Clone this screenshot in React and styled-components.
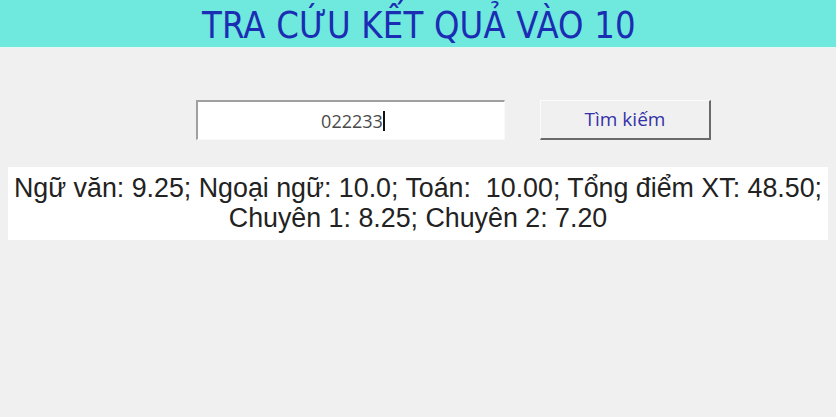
import React from 'react';
import styled, { createGlobalStyle } from 'styled-components';

const GlobalStyle = createGlobalStyle`
  html, body {
    margin: 0;
    padding: 0;
    background: #f0f0f0;
  }
  body {
    font-family: "Liberation Sans", Arial, sans-serif;
  }
`;

const Page = styled.div`
  width: 836px;
  height: 417px;
  background: #f0f0f0;
  display: flex;
  flex-direction: column;
`;

const Header = styled.div`
  height: 47px;
  background: #6fe8dd;
  display: flex;
  align-items: center;
  justify-content: center;
  border-bottom: 1px solid #e6f7f5;
`;

const Title = styled.h1`
  margin: 0;
  font-family: "Liberation Sans Narrow", "DejaVu Sans Condensed", sans-serif;
  font-weight: normal;
  font-size: 36px;
  color: #1a2db3;
  letter-spacing: 0.2px;
  padding: 2px 0 0 2px;
  transform: scaleY(1.05);
`;

const SearchRow = styled.div`
  display: flex;
  align-items: center;
  gap: 35px;
  margin-top: 52px;
  padding-left: 196px;
`;

const Field = styled.div`
  box-sizing: border-box;
  width: 309px;
  height: 40px;
  background: #fff;
  border-top: 2px solid #a0a0a0;
  border-left: 2px solid #a0a0a0;
  border-right: 1px solid #fafafa;
  border-bottom: 1px solid #fafafa;
  display: flex;
  align-items: center;
  justify-content: center;
  font-family: "Open Sans", "DejaVu Sans", sans-serif;
  font-size: 18px;
  color: #4a4a4a;
  padding-left: 4px;
`;

const Caret = styled.span`
  display: inline-block;
  width: 2px;
  height: 20px;
  background: #111;
`;

const Button = styled.button`
  box-sizing: border-box;
  width: 171px;
  height: 40px;
  background: #f0f0f0;
  border-top: 1px solid #fbfbfb;
  border-left: 1px solid #fbfbfb;
  border-right: 2px solid #6a6a6a;
  border-bottom: 2px solid #6a6a6a;
  font-family: "Open Sans", "DejaVu Sans", sans-serif;
  font-size: 19px;
  color: #3430aa;
  padding: 0 0 2px;
`;

const Result = styled.div`
  margin: 27px 8px 0;
  background: #fff;
  padding: 6px 4px 7px;
  text-align: center;
  font-size: 26.8px;
  line-height: 30px;
  color: #222;
  white-space: nowrap;
`;

export default function App() {
  return (
    <>
      <GlobalStyle />
      <Page>
        <Header>
          <Title>TRA CỨU KẾT QUẢ VÀO 10</Title>
        </Header>
        <SearchRow>
          <Field role="textbox">
            022233
            <Caret />
          </Field>
          <Button type="button">Tìm kiếm</Button>
        </SearchRow>
        <Result>
          Ngữ văn: 9.25; Ngoại ngữ: 10.0; Toán:&nbsp; 10.00; Tổng điểm XT: 48.50;
          <br />
          Chuyên 1: 8.25; Chuyên 2: 7.20
        </Result>
      </Page>
    </>
  );
}
